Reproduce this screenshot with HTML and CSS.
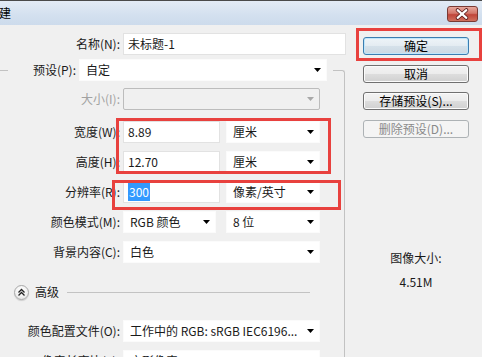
FILE: index.html
```html
<!DOCTYPE html>
<html lang="zh-CN">
<head>
<meta charset="utf-8">
<title>新建</title>
<link rel="stylesheet" href="styles.css">
</head>
<body>
<div class="window">
  <div class="titlebar">
    <span class="title">新建</span>
    <span class="close">
      <svg width="31" height="16" viewBox="0 0 31 16">
        <path d="M11 4 L20 12 M20 4 L11 12" stroke="#5a1d1d" stroke-width="4" stroke-linecap="round"/>
        <path d="M11 4 L20 12 M20 4 L11 12" stroke="#ffffff" stroke-width="2.2" stroke-linecap="round"/>
      </svg>
    </span>
  </div>
  <div class="dialog">
    <div class="form">
      <div class="row row-name">
        <span class="lbl">名称(N):</span>
        <div class="input w-name">未标题-1</div>
      </div>
      <fieldset class="group">
        <legend class="legend">
          <span class="lbl lbl-preset">预设(P):</span>
          <div class="select w-preset"><span>自定</span><svg class="arrow" width="7" height="4" viewBox="0 0 7 4"><path d="M0 0H7L3.5 4Z"/></svg></div>
        </legend>
        <div class="row row-size">
          <span class="lbl lbl-off">大小(I):</span>
          <div class="select select-off w-full"><span></span><svg class="arrow" width="7" height="4" viewBox="0 0 7 4"><path d="M0 0H7L3.5 4Z" fill="#a8a8a8"/></svg></div>
        </div>
        <div class="row row-w">
          <span class="lbl">宽度(W):</span>
          <div class="input w-num">8.89</div>
          <div class="select w-unit"><span>厘米</span><svg class="arrow" width="7" height="4" viewBox="0 0 7 4"><path d="M0 0H7L3.5 4Z"/></svg></div>
        </div>
        <div class="row row-std">
          <span class="lbl">高度(H):</span>
          <div class="input w-num">12.70</div>
          <div class="select w-unit"><span>厘米</span><svg class="arrow" width="7" height="4" viewBox="0 0 7 4"><path d="M0 0H7L3.5 4Z"/></svg></div>
        </div>
        <div class="row row-std">
          <span class="lbl">分辨率(R):</span>
          <div class="input w-num"><span class="sel-text">300</span></div>
          <div class="select w-unit"><span>像素/英寸</span><svg class="arrow" width="7" height="4" viewBox="0 0 7 4"><path d="M0 0H7L3.5 4Z"/></svg></div>
        </div>
        <div class="row row-std">
          <span class="lbl">颜色模式(M):</span>
          <div class="select w-mode"><span>RGB 颜色</span><svg class="arrow" width="7" height="4" viewBox="0 0 7 4"><path d="M0 0H7L3.5 4Z"/></svg></div>
          <div class="select w-unit"><span>8 位</span><svg class="arrow" width="7" height="4" viewBox="0 0 7 4"><path d="M0 0H7L3.5 4Z"/></svg></div>
        </div>
        <div class="row row-std">
          <span class="lbl">背景内容(C):</span>
          <div class="select w-full"><span>白色</span><svg class="arrow" width="7" height="4" viewBox="0 0 7 4"><path d="M0 0H7L3.5 4Z"/></svg></div>
        </div>
        <div class="adv">
          <span class="adv-btn">
            <svg width="9" height="9" viewBox="0 0 9 9"><path d="M1.5 4.5 L4.5 1.5 L7.5 4.5 M1.5 7.5 L4.5 4.5 L7.5 7.5" fill="none" stroke="#222" stroke-width="1.3"/></svg>
          </span>
          <span class="adv-text">高级</span>
          <span class="adv-line"></span>
        </div>
        <div class="row row-prof">
          <span class="lbl">颜色配置文件(O):</span>
          <div class="select w-full"><span class="clip">工作中的 RGB: sRGB IEC6196...</span><svg class="arrow" width="7" height="4" viewBox="0 0 7 4"><path d="M0 0H7L3.5 4Z"/></svg></div>
        </div>
        <div class="row row-std">
          <span class="lbl">像素长宽比(X):</span>
          <div class="select w-full"><span>方形像素</span><svg class="arrow" width="7" height="4" viewBox="0 0 7 4"><path d="M0 0H7L3.5 4Z"/></svg></div>
        </div>
      </fieldset>
    </div>
    <div class="side">
      <div class="btn btn-default">确定</div>
      <div class="btn btn-2">取消</div>
      <div class="btn btn-3">存储预设(S)...</div>
      <div class="btn btn-off">删除预设(D)...</div>
      <div class="info">
        <div>图像大小:</div>
        <div>4.51M</div>
      </div>
    </div>
  </div>
  <div class="mark mark-wh"></div>
  <div class="mark mark-res"></div>
  <div class="mark mark-ok"></div>
</div>
</body>
</html>
```

FILE: styles.css
```css
* { box-sizing: border-box; }
html, body {
  margin: 0;
  padding: 0;
  width: 482px;
  height: 357px;
  overflow: hidden;
  background: #f0f0f0;
}
body {
  font-family: "Noto Sans CJK SC", "Noto Sans", sans-serif;
  font-size: 12px;
  color: #1a1a1a;
}
.window {
  position: relative;
  width: 482px;
  height: 357px;
  overflow: hidden;
}
.titlebar {
  height: 25px;
  border-top: 1px solid #4a4a4a;
  background: linear-gradient(#e3ebf5, #d3e0ef 60%, #cddbec);
  display: flex;
  align-items: center;
  justify-content: space-between;
  padding-right: 4px;
}
.title {
  margin-left: -13px;
  font-size: 12px;
  line-height: 16px;
  color: #000;
}
.close {
  width: 31px;
  height: 16px;
  margin-top: 1px;
  border: 1px solid #7a3a34;
  border-radius: 3px;
  background: linear-gradient(#e7a89c, #d3766a 45%, #c0453a 55%, #d0705e);
  display: flex;
}
.close svg { display: block; margin: -1px 0 0 -1px; }

.dialog {
  display: flex;
}
.form {
  width: 350px;
  flex: none;
}
.row {
  display: flex;
  align-items: center;
  height: 22px;
}
.lbl {
  width: 120px;
  flex: none;
  text-align: right;
  margin-right: 3px;
  white-space: nowrap;
  line-height: 16px;
}
.lbl-off { color: #a2a2a2; }
.row-name { margin-top: 8px; }

.input, .select {
  height: 22px;
  background: #fff;
  line-height: 20px;
  white-space: nowrap;
  flex: none;
}
.input {
  border: 1px solid #e2e2e2;
  padding-left: 4px;
}
.select {
  border: 1px solid #fbfbfb;
  padding: 0 5px 0 6px;
  display: flex;
  align-items: center;
  justify-content: space-between;
}
.select .arrow { flex: none; fill: #000; }
.select-off {
  background: #f0f0f0;
  border: 1px solid #bcbcbc;
  border-radius: 2px;
}
.clip { overflow: hidden; white-space: nowrap; }
.sel-text {
  background: #3399ff;
  color: #fff;
  padding: 1px 1px;
}

.w-name { width: 223px; }
.w-preset { width: 248px; }
.w-full { width: 197px; }
.w-num { width: 97px; margin-right: 6px; }
.w-unit { width: 94px; }
.w-mode { width: 93px; margin-right: 10px; }

.group {
  margin: 4px 0 0 -31px;
  width: 376px;
  border: 1px solid #c2c2c2;
  border-top-right-radius: 3px;
  border-bottom: none;
  padding: 7px 0 0 30px;
  min-width: 0;
  height: 320px;
}
.legend {
  margin-left: 8px;
  padding: 0 6px 0 0;
  display: flex;
  align-items: center;
  height: 22px;
}
.lbl-preset { width: 68px; }

.row-w { margin-top: 11px; }
.row-std { margin-top: 8px; }

.adv {
  margin-top: 19px;
  height: 20px;
  display: flex;
  align-items: center;
  padding-left: 14px;
}
.adv-btn {
  width: 15px;
  height: 15px;
  border-radius: 50%;
  border: 1px solid #a9a9a9;
  background: radial-gradient(circle at 50% 35%, #ffffff, #f2f2f2 55%, #d9d9d9);
  box-shadow: 0 1px 1px rgba(0,0,0,0.15);
  display: flex;
  align-items: center;
  justify-content: center;
  flex: none;
}
.adv-text {
  margin-left: 6px;
  line-height: 16px;
}
.adv-line {
  flex: 1;
  height: 1px;
  background: #c3c3c3;
  margin: 1px 34px 0 8px;
}
.row-prof { margin-top: 18px; }

.side {
  width: 132px;
  padding-top: 12px;
  padding-left: 13px;
}
.btn {
  width: 106px;
  height: 18px;
  border: 1px solid #707070;
  border-radius: 3px;
  background: linear-gradient(#f3f3f3, #ececec 48%, #dddddd 52%, #d0d0d0);
  box-shadow: inset 0 0 0 1px #fbfbfb;
  text-align: center;
  line-height: 16px;
  color: #000;
}
.btn-default {
  border-color: #3b7db0;
  box-shadow: inset 0 0 0 1px #bfe6fb;
  background: linear-gradient(#eef4f8, #e4ecf2 48%, #d5e1ea 52%, #cbd8e2);
}
.btn-2 { margin-top: 10px; }
.btn-3 { margin-top: 9px; }
.btn-off {
  margin-top: 10px;
  border-color: #adb2b5;
  background: #f4f4f4;
  box-shadow: none;
  color: #8a8a8a;
}
.info {
  margin-top: 108px;
  width: 106px;
  text-align: center;
  line-height: 24px;
  color: #1a1a1a;
}

.mark {
  position: absolute;
  border: 3px solid #e8413e;
}
.mark-wh { left: 116px; top: 118px; width: 215px; height: 56px; }
.mark-res { left: 112px; top: 180px; width: 229px; height: 30px; }
.mark-ok { left: 356px; top: 28px; width: 126px; height: 33px; }
```
